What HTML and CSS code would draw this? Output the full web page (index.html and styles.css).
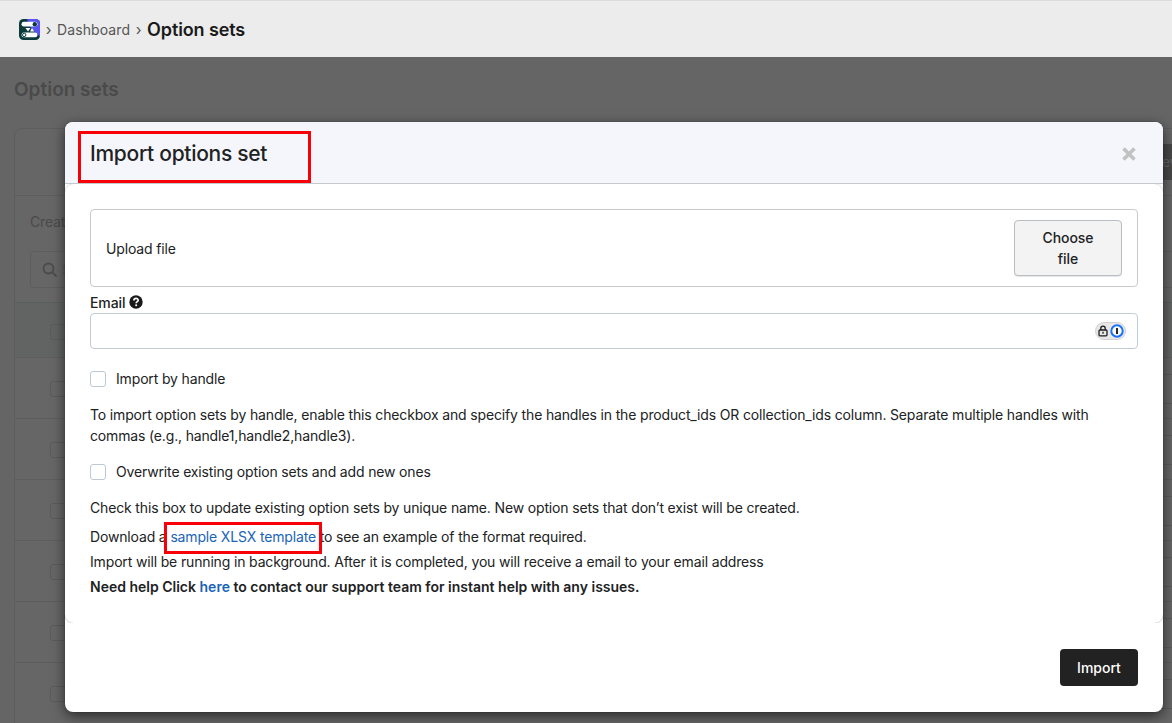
FILE: index.html
```html
<!DOCTYPE html>
<html lang="en">
<head>
	<meta charset="utf-8">
	<title>Option sets</title>
	<link rel="stylesheet" href="styles.css">
</head>
<body>

<header class="topbar">
	<svg class="logo" width="21" height="21" viewBox="0 0 21 21">
		<rect width="21" height="21" rx="4.5" fill="#0c3a3a"/>
		<path d="M8 0h8.500a4.500 4.500 0 0 1 4.500 4.500v13l-4-3.500-5-5z" fill="#5a54f6"/>
		<rect x="2.500" y="2.800" width="16" height="4.800" rx="2.400" fill="#fff"/>
		<circle cx="15.800" cy="5.200" r="2.200" fill="#0c3a3a"/>
		<path d="M6.500 9h5l-2.500 3.500z M11 12.500l2-3.500 2.300 3.500z" fill="#fff"/>
		<rect x="2.500" y="13.500" width="16" height="4.800" rx="2.400" fill="#fff"/>
		<circle cx="5.200" cy="15.900" r="1.700" fill="#fff" stroke="#0c3a3a"/>
	</svg>
	<span class="sep">›</span>
	<a class="crumb">Dashboard</a>
	<span class="sep">›</span>
	<span class="current">Option sets</span>
</header>

<main class="page">
	<h1 class="page-title">Option sets</h1>
	<div class="card">
		<div class="card-head"><span class="new-btn">ew</span></div>
		<div class="card-tools">
			<p>Create</p>
			<div class="search">
				<svg width="16" height="16" viewBox="0 0 16 16" fill="none" stroke="#4b4b4b" stroke-width="1.800">
					<circle cx="6.500" cy="6.500" r="5"/>
					<path d="M10.200 10.200l4.300 4.300"/>
				</svg>
				<span>Search</span>
			</div>
		</div>
		<div class="row row-head"><i class="tick"></i></div>
		<div class="row"><i class="tick"></i><i class="action"></i></div>
		<div class="row"><i class="tick"></i><i class="action"></i></div>
		<div class="row"><i class="tick"></i><i class="action"></i></div>
		<div class="row"><i class="tick"></i><i class="action"></i></div>
		<div class="row"><i class="tick"></i><i class="action"></i></div>
		<div class="row"><i class="tick"></i><i class="action"></i></div>
	</div>
</main>

<div class="modal">
	<div class="modal-header">
		<h2>Import options set</h2>
		<svg class="close" width="14" height="14" viewBox="0 0 14 14" stroke="#c2c2c2" stroke-width="3.600">
			<path d="M1.500 1.500l11 11M12.500 1.500l-11 11"/>
		</svg>
	</div>
	<div class="modal-body">
		<div class="upload">
			<span>Upload file</span>
			<button class="choose">Choose file</button>
		</div>
		<label class="label">Email
			<svg width="14" height="14" viewBox="0 0 14 14">
				<circle cx="7" cy="7" r="6.700" fill="#1a1a1a"/>
				<path d="M4.900 5.500c0-2.800 4.300-2.700 4.300-.3 0 1.500-2 1.500-2 3.100" fill="none" stroke="#fff" stroke-width="1.700"/>
				<circle cx="7.150" cy="10.300" r="1.050" fill="#fff"/>
			</svg>
		</label>
		<div class="input">
			<span class="pill">
				<svg width="10" height="12" viewBox="0 0 10 12" fill="none" stroke="#1c1c1c" stroke-width="1.300">
					<rect x="1" y="5" width="8" height="5.800" rx="1"/>
					<path d="M2.800 5V3.300a2.200 2.200 0 0 1 4.400 0V5M5 6.800v2"/>
				</svg>
				<svg width="14" height="14" viewBox="0 0 14 14">
					<circle cx="7" cy="7" r="5.700" fill="#fff" stroke="#1a73f8" stroke-width="2"/>
					<path d="M7 4v6" stroke="#1c1c1c" stroke-width="1.900"/>
				</svg>
			</span>
		</div>
		<label class="check"><span class="box"></span>Import by handle</label>
		<p class="help">To import option sets by handle, enable this checkbox and specify the handles in the product_ids OR collection_ids column. Separate multiple handles with commas (e.g., handle1,handle2,handle3).</p>
		<label class="check second"><span class="box"></span>Overwrite existing option sets and add new ones</label>
		<p class="help">Check this box to update existing option sets by unique name. New option sets that don’t exist will be created.</p>
		<p class="note first">Download a <a>sample XLSX template</a> to see an example of the format required.</p>
		<p class="note">Import will be running in background. After it is completed, you will receive a email to your email address</p>
		<p class="note"><b>Need help Click <a>here</a> to contact our support team for instant help with any issues.</b></p>
	</div>
	<div class="modal-footer">
		<button class="import">Import</button>
	</div>
	<!-- red highlights over the title and the template link -->
	<div class="mark mark-title"></div>
	<div class="mark mark-link"></div>
</div>

</body>
</html>
```

FILE: styles.css
```css
* {
	margin: 0;
	padding: 0;
	box-sizing: border-box;
}
body {
	width: 1172px;
	height: 723px;
	overflow: hidden;
	position: relative;
	background: #656565;
	font: 14px/21px Inter, "Liberation Sans", sans-serif;
	letter-spacing: -.155px;
	color: #202223;
}
.topbar {
	height: 57px;
	padding: 1px 0 0 19px;
	display: flex;
	align-items: center;
	background: #ececec;
	border-top: 1px solid #dcdcdc;
}
.sep {
	width: 17px;
	text-align: center;
	color: #555;
	font-size: 15px;
}
.crumb {
	color: #555;
	font-size: 14px;
	letter-spacing: .1px;
}
.current {
	font-size: 18px;
	font-weight: 600;
	color: #1a1a1a;
	letter-spacing: -.12px;
}
.page {
	height: 666px;
	padding: 20px 0 0 14px;
	overflow: hidden;
}
.page-title {
	font-size: 19px;
	line-height: 26px;
	font-weight: 600;
	letter-spacing: 0;
	color: #4a4a4a;
	margin-bottom: 25px;
}
.card {
	width: 1200px;
	height: 640px;
	border: 1px solid #5d5d5d;
	border-radius: 8px;
	background: #666;
}
.card-head {
	height: 67px;
	padding: 15px 40px 0 0;
	display: flex;
	justify-content: flex-end;
	border-bottom: 1px solid #5d5d5d;
}
.new-btn {
	width: 120px;
	height: 36px;
	padding-left: 109px;
	line-height: 36px;
	background: #484848;
	color: #666;
}
.card-tools {
	height: 107px;
	padding: 15px 15px;
	border-bottom: 1px solid #5b5e5e;
	color: #4a4a4a;
}
.search {
	height: 37px;
	margin-top: 19px;
	padding-left: 11px;
	display: flex;
	align-items: center;
	gap: 4px;
	border: 1px solid #5d5d5d;
	border-radius: 4px;
	color: #5a5a5a;
}
.row {
	height: 61px;
	padding: 2px 20px 0 35px;
	display: flex;
	align-items: center;
	justify-content: space-between;
	border-bottom: 1px solid #5d5d5d;
}
.row-head {
	height: 55px;
	padding-top: 4px;
	background: #626464;
}
.tick {
	width: 16px;
	height: 16px;
	border: 1px solid #5b5b5b;
	border-radius: 3px;
}
.action {
	width: 60px;
	height: 30px;
	border: 1px solid #5b5b5b;
}
.modal {
	position: absolute;
	left: 65px;
	top: 122px;
	width: 1098px;
	height: 590px;
	display: flex;
	flex-direction: column;
	background: #fff;
	border-radius: 8px;
	box-shadow: 0 4px 13px rgba(0, 0, 0, .6), 0 0 1px rgba(0, 0, 0, .5);
}
.modal-header {
	height: 62px;
	padding: 2px 27px 0 25px;
	display: flex;
	align-items: center;
	justify-content: space-between;
	background: #f5f6fb;
	border-bottom: 1px solid #c4c9cd;
	border-radius: 8px 8px 0 0;
}
.modal-header h2 {
	font-size: 21px;
	line-height: 28px;
	font-weight: 500;
	letter-spacing: -.29px;
}
/* only the rounded corners of the section show */
.modal-body {
	height: 439px;
	padding: 25px;
	background:
		radial-gradient(circle at 100% 100%, transparent 7px, #e6e6e6 8px, transparent 9px) 0 0/8px 8px no-repeat,
		radial-gradient(circle at 0 100%, transparent 7px, #e6e6e6 8px, transparent 9px) 100% 0/8px 8px no-repeat,
		radial-gradient(circle at 100% 0, transparent 7px, #dedede 8px, transparent 9px) 0 100%/8px 8px no-repeat,
		radial-gradient(circle at 0 0, transparent 7px, #dedede 8px, transparent 9px) 100% 100%/8px 8px no-repeat;
}
.upload {
	height: 78px;
	padding: 0 15px;
	display: flex;
	align-items: center;
	justify-content: space-between;
	border: 1px solid #c6cacd;
	border-radius: 4px;
}
.choose {
	width: 108px;
	height: 56px;
	padding: 0 20px;
	font: 500 14px/21px Inter, "Liberation Sans", sans-serif;
	letter-spacing: -.05px;
	color: #202223;
	background: #f3f3f3;
	border: 1px solid #b9bec3;
	border-radius: 4px;
	box-shadow: 0 1px 1px rgba(0, 0, 0, .1);
}
.label {
	height: 26px;
	padding-top: 4px;
	display: flex;
	align-items: center;
	gap: 4px;
	font-weight: 500;
	letter-spacing: -.1px;
}
.input {
	height: 36px;
	padding-right: 11px;
	display: flex;
	align-items: center;
	justify-content: flex-end;
	border: 1px solid #c3ccd5;
	border-radius: 4px;
}
.pill {
	width: 31px;
	height: 18px;
	display: flex;
	align-items: center;
	justify-content: center;
	gap: 2px;
	background: #e7e7e7;
	border: 1px solid #d2d2d2;
	border-radius: 9px;
}
.check {
	margin-top: 19px;
	display: flex;
	align-items: center;
	gap: 10px;
}
.second {
	margin-top: 15px;
}
.box {
	width: 16px;
	height: 16px;
	border: 1px solid #bdc8d5;
	border-radius: 3px;
}
.help {
	margin-top: 15px;
}
.note {
	margin-top: 4px;
}
.first {
	margin-top: 8px;
}
.note b {
	font-weight: 600;
	letter-spacing: 0;
}
.note a {
	color: #1a64b8;
}
.modal-footer {
	padding: 26px 25px 0;
	display: flex;
	justify-content: flex-end;
}
.import {
	width: 78px;
	height: 37px;
	font: 500 14px/21px Inter, "Liberation Sans", sans-serif;
	letter-spacing: 0;
	color: #fff;
	background: #222;
	border: 0;
	border-radius: 4px;
}
.mark {
	position: absolute;
	border: 3px solid #f80008;
}
.mark-title {
	left: 13px;
	top: 9px;
	width: 233px;
	height: 52px;
}
.mark-link {
	left: 99px;
	top: 400px;
	width: 158px;
	height: 32px;
}
```
